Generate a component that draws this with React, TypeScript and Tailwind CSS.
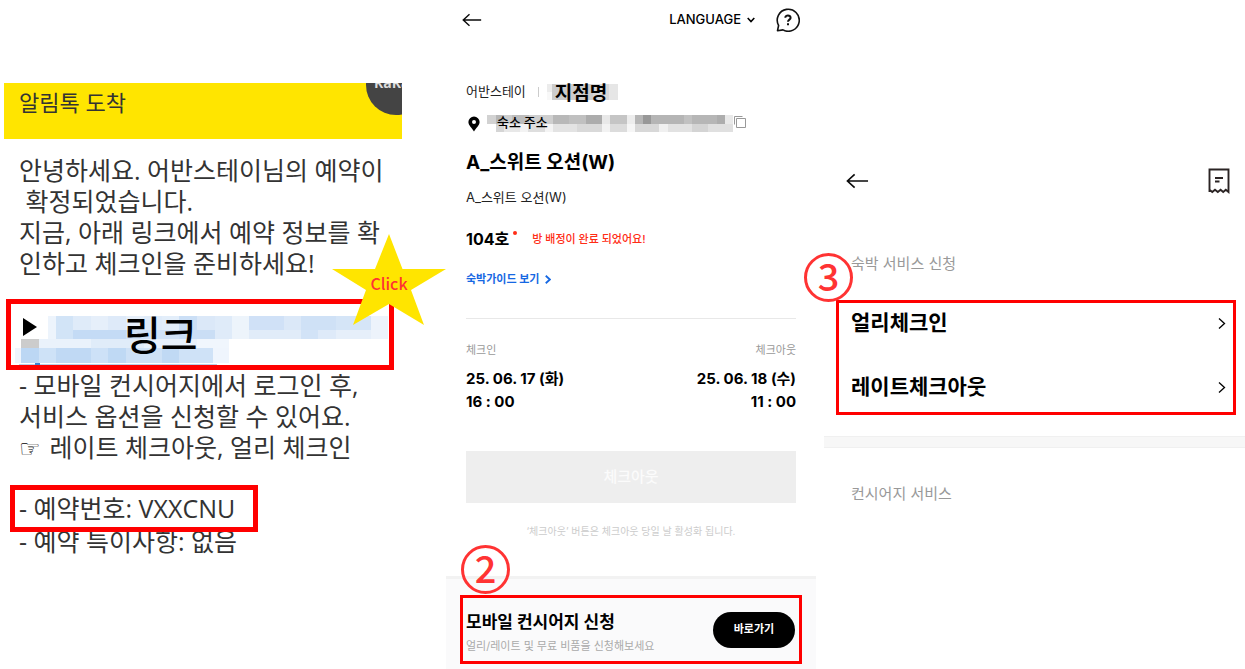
import React from "react";

const gothic = "font-['Open_Sans','Noto_Sans_CJK_KR',sans-serif]";
const sans = "font-['Inter','Noto_Sans_CJK_KR',sans-serif]";

type Tile = [x: number, y: number, w: number, h: number, fill: string];

const linkTiles: Tile[] = [
  [33, 12, 8, 23, "#edf4fc"],
  [41, 12, 17, 23, "#d2e4f7"],
  [58, 12, 18, 14, "#dfebf9"],
  [76, 12, 17, 14, "#e6effa"],
  [93, 12, 18, 14, "#deeaf9"],
  [111, 12, 18, 14, "#e6effa"],
  [129, 12, 18, 14, "#e0ecfa"],
  [147, 12, 17, 14, "#e3eefa"],
  [164, 12, 18, 14, "#cbdff6"],
  [182, 12, 18, 14, "#dbe8f8"],
  [200, 12, 17, 23, "#dfebf9"],
  [217, 12, 17, 23, "#edf4fb"],
  [234, 12, 35, 14, "#d0e1f7"],
  [269, 12, 17, 14, "#dbe8f8"],
  [286, 12, 35, 14, "#cfe1f6"],
  [321, 12, 35, 14, "#d5e5f7"],
  [356, 12, 17, 23, "#edf3fb"],
  [58, 26, 53, 9, "#c4dbf5"],
  [111, 26, 53, 9, "#d0e2f7"],
  [164, 26, 36, 9, "#cadef5"],
  [234, 26, 52, 9, "#e1ecf9"],
  [286, 26, 17, 9, "#d2e3f7"],
  [303, 26, 18, 9, "#deeaf9"],
  [321, 26, 35, 9, "#e6effa"],
  [6, 35, 18, 9, "#cccccc"],
  [24, 35, 52, 9, "#eaf2fb"],
  [76, 35, 53, 9, "#e0ecf9"],
  [129, 35, 53, 9, "#e8f1fb"],
  [182, 35, 32, 9, "#f0f6fd"],
  [0, 44, 6, 15, "#eff5fd"],
  [6, 44, 18, 15, "#bcd7f4"],
  [24, 44, 17, 15, "#cee2f7"],
  [41, 44, 35, 15, "#c0d9f4"],
  [76, 44, 17, 15, "#cde1f7"],
  [93, 44, 18, 15, "#bfd9f4"],
  [111, 44, 36, 15, "#cee1f6"],
  [147, 44, 17, 15, "#c0d9f4"],
  [164, 44, 34, 15, "#cfe2f7"],
  [198, 44, 16, 15, "#eff5fd"],
  [4, 60, 198, 1, "#b9cfe8"],
  [20, 59, 5, 2, "#3b82d0"],
];

const nameTiles: Tile[] = [
  [0, 0, 5, 8, "#ececec"],
  [5, 0, 41, 16, "#cccccc"],
  [46, 0, 16, 16, "#d8d8d8"],
  [62, 0, 9, 16, "#e6e6e6"],
  [0, 8, 5, 8, "#f8f8f8"],
];

const addressTiles: Tile[] = [
  [0, 0, 9, 9, "#d2d2d2"],
  [9, 0, 8, 9, "#b6b6b6"],
  [17, 0, 8, 9, "#cecece"],
  [25, 0, 17, 9, "#bdbdbd"],
  [42, 0, 16, 9, "#cecece"],
  [58, 0, 8, 9, "#cfcfcf"],
  [66, 0, 16, 9, "#b8b8b8"],
  [82, 0, 17, 9, "#c0c0c0"],
  [99, 0, 16, 9, "#acacac"],
  [115, 0, 8, 9, "#e8e8e8"],
  [123, 0, 17, 9, "#c5c5c5"],
  [140, 0, 8, 9, "#ededed"],
  [148, 0, 8, 9, "#b6b6b6"],
  [156, 0, 8, 9, "#989898"],
  [164, 0, 33, 9, "#b5b5b5"],
  [197, 0, 8, 9, "#c1c1c1"],
  [205, 0, 25, 9, "#b6b6b6"],
  [230, 0, 8, 9, "#adadad"],
  [238, 0, 8, 9, "#e9e9e9"],
  [9, 9, 8, 8, "#d5d5d5"],
  [17, 9, 16, 8, "#e8e8e8"],
  [33, 9, 8, 8, "#f3f3f3"],
  [41, 9, 17, 8, "#dedede"],
  [58, 9, 8, 8, "#f4f4f4"],
  [66, 9, 24, 8, "#e3e3e3"],
  [90, 9, 25, 8, "#d9d9d9"],
  [115, 9, 8, 8, "#f2f2f2"],
  [123, 9, 17, 8, "#dcdcdc"],
  [140, 9, 8, 8, "#f6f6f6"],
  [148, 9, 24, 8, "#d8d8d8"],
  [172, 9, 9, 8, "#f0f0f0"],
  [181, 9, 24, 8, "#e2e2e2"],
  [205, 9, 16, 8, "#d4d4d4"],
  [221, 9, 25, 8, "#e0e0e0"],
];

function Mosaic({ tiles, width, height, className }: { tiles: Tile[]; width: number; height: number; className?: string }) {
  return (
    <svg width={width} height={height} viewBox={`0 0 ${width} ${height}`} className={className} aria-hidden="true" shapeRendering="crispEdges">
      {tiles.map(([x, y, w, h, fill]) => (
        <rect key={`${x}-${y}`} x={x} y={y} width={w} height={h} fill={fill} />
      ))}
    </svg>
  );
}

function BackArrow({ className }: { className: string }) {
  return (
    <svg viewBox="0 0 24 16" className={className} fill="none" stroke="#0a0a0a" strokeWidth="1.7" aria-hidden="true">
      <path d="M23 8H1.5M9 1L1.5 8L9 15" />
    </svg>
  );
}

function Chevron({ className, strokeWidth }: { className: string; strokeWidth: number }) {
  return (
    <svg viewBox="0 0 8 12" className={className} fill="none" stroke="currentColor" strokeWidth={strokeWidth} aria-hidden="true">
      <path d="M1 1L6.5 6L1 11" />
    </svg>
  );
}

function StepBadge({ step, className }: { step: number; className: string }) {
  return (
    <span
      className={`absolute z-10 flex size-[49px] items-center justify-center rounded-full border-3 border-[#ff3333] pb-[6px] font-['Noto_Sans_CJK_KR',sans-serif] text-[38px] leading-none font-medium text-[#ff3333] ${className}`}
    >
      {step}
    </span>
  );
}

function Star() {
  return (
    <div className="absolute top-[234px] right-0 z-10 h-[92px] w-[114px]">
      <svg viewBox="0 0 114 92" className="absolute inset-0 size-full" aria-hidden="true">
        <path d="M57 0L70.5 35H114L79 56L92 91L57 70L21 91L34 56L0 35H43Z" fill="#ffe500" />
      </svg>
      <span className="relative block pt-[39px] text-center font-['Noto_Sans_CJK_KR',sans-serif] text-base leading-5 font-medium text-[#ff3333]">Click</span>
    </div>
  );
}

function MessagePanel() {
  return (
    <section className={`relative pt-[83px] text-[25px] leading-[31px] text-[#333] ${gothic}`}>
      <header className="relative mr-11 ml-1 h-14 overflow-hidden bg-[#ffe500] pt-1 pl-[15px] text-[22px]">
        알림톡 도착
        <span className="absolute -top-7 -right-6 size-[60px] rounded-full bg-[#444] pt-[18px] pl-2 text-sm font-bold text-[#ddd]">KaKa</span>
      </header>

      <p className="mt-4 pl-[19px] whitespace-pre">
        안녕하세요. 어반스테이님의 예약이{"\n"} 확정되었습니다.{"\n"}지금, 아래 링크에서 예약 정보를 확{"\n"}인하고 체크인을 준비하세요!
      </p>

      <div className="relative mt-5 mr-[52px] ml-[6px] h-[71px] border-5 border-[#ff0000]">
        <Mosaic tiles={linkTiles} width={373} height={61} className="absolute top-0 left-1" />
        <svg viewBox="0 0 14 18" className="absolute top-[14px] left-3 h-[18px] w-[14px]" aria-hidden="true">
          <path d="M0 0L14 9L0 18Z" fill="#000" />
        </svg>
        <a href="#link" className="relative ml-[113px] block pt-2 text-[40px] leading-[46px] font-medium text-black">
          링크
        </a>
      </div>
      <Star />

      <p className="pl-[19px] whitespace-pre">
        - 모바일 컨시어지에서 로그인 후,{"\n"}서비스 옵션을 신청할 수 있어요.{"\n"}
        <span className="inline-block w-6 font-['DejaVu_Sans',sans-serif] text-2xl leading-none font-bold text-black">☞</span> 레이트 체크아웃, 얼리 체크인
      </p>

      <p className="relative z-10 mt-[22px] ml-[10px] h-[47px] w-[248px] border-5 border-[#ff0000] pt-[3px] pl-1">- 예약번호: VXXCNU</p>
      <p className="-mt-[6px] pl-[19px]">- 예약 특이사항: 없음</p>
    </section>
  );
}

function StayPanel() {
  return (
    <section className={`text-black ${sans}`}>
      <header className="flex h-10 items-center pr-4 pl-4">
        <button type="button" aria-label="뒤로">
          <BackArrow className="h-[14px] w-5" />
        </button>
        <button type="button" className="ml-auto flex items-center gap-[6px] text-[13px] font-medium">
          LANGUAGE
          <svg viewBox="0 0 8 6" className="h-[6px] w-2" fill="none" stroke="currentColor" strokeWidth="1.6" aria-hidden="true">
            <path d="M0.7 1L4 4.5L7.3 1" />
          </svg>
        </button>
        <button type="button" aria-label="도움말" className="ml-[21px]">
          <svg viewBox="0 0 24 24" className="size-6" fill="none" stroke="#111" strokeWidth="1.6" aria-hidden="true">
            <path d="M2.6 17.5A11 11 0 1 1 7 21.9L1.5 22.7Z" strokeLinejoin="round" />
            <path d="M9.3 9.8C9.3 6.6 14.8 6.8 14.6 9.9C14.5 11.7 12 11.7 12 13.8M12 15.3V17.2" strokeWidth="2" />
          </svg>
        </button>
      </header>

      <div className="px-5 pt-[41px]">
        <div className="flex h-[22px] items-center text-[13px] text-[#222]">
          어반스테이
          <span className="mr-2 ml-3 h-[10px] w-px bg-[#ccc]" />
          <span className="relative h-4 w-[71px]">
            <Mosaic tiles={nameTiles} width={71} height={16} className="absolute inset-0" />
            <span className="relative block pl-2 font-['Noto_Sans_CJK_KR',sans-serif] text-[19px] leading-4 font-bold text-black">지점명</span>
          </span>
        </div>

        <div className="mt-3 flex h-[17px] items-center">
          <svg viewBox="0 0 12 16" className="ml-[2px] h-4 w-3" aria-hidden="true">
            <path d="M6 0.5A5.6 5.6 0 0 0 0.4 6.1C0.4 9.5 4 12 6 15.5C8 12 11.6 9.5 11.6 6.1A5.6 5.6 0 0 0 6 0.5ZM6 4A2 2 0 1 1 6 8A2 2 0 0 1 6 4Z" fill="#000" fillRule="evenodd" />
          </svg>
          <span className="relative ml-[7px] h-[17px] w-[246px]">
            <Mosaic tiles={addressTiles} width={246} height={17} className="absolute inset-0" />
            <span className="relative block pl-[10px] font-['Noto_Sans_CJK_KR',sans-serif] text-[13px] leading-[14px] font-medium">숙소 주소</span>
          </span>
          <button type="button" aria-label="주소 복사" className="self-start">
            <svg viewBox="0 0 14 14" className="size-[14px]" fill="none" stroke="#999" aria-hidden="true">
              <path d="M1.5 9.5V1.5H9.5M3.5 3.5H12.5V12.5H3.5Z" />
            </svg>
          </button>
        </div>

        <h1 className="mt-[18px] text-[19px] leading-[26px] font-bold">A_스위트 오션(W)</h1>
        <p className="mt-[11px] text-[13px] leading-5 text-[#222]">A_스위트 오션(W)</p>

        <div className="mt-5 flex h-6 items-center">
          <strong className="text-base leading-6 font-bold">104호</strong>
          <span className="mb-3 ml-1 size-1 rounded-full bg-[#ff2d16]" />
          <span className="ml-[15px] text-[11px] font-medium text-[#ff2d16]">방 배정이 완료 되었어요!</span>
        </div>

        <a href="#guide" className="mt-5 flex h-4 items-center gap-[6px] text-[11px] font-bold text-[#1668e3]">
          숙박가이드 보기
          <Chevron className="h-[9px] w-[6px]" strokeWidth={2.4} />
        </a>

        <div className="mt-[31px] border-t border-[#e8e8e8] pt-[23px]">
          <div className="flex justify-between text-[11px] leading-4 text-[#999]">
            <span>체크인</span>
            <span>체크아웃</span>
          </div>
          <div className="mt-[9px] flex justify-between text-[15px] leading-[23px] font-bold">
            <p>
              25. 06. 17 (화)
              <br />
              16 : 00
            </p>
            <p className="text-right">
              25. 06. 18 (수)
              <br />
              11 : 00
            </p>
          </div>
        </div>

        <button type="button" disabled className="mt-[38px] h-[52px] w-full bg-[#eee] text-[15px] font-medium text-[#fbfbfb]">
          체크아웃
        </button>
        <p className="mt-5 text-center text-[10px] leading-4 text-[#ccc]">‘체크아웃’ 버튼은 체크아웃 당일 날 활성화 됩니다.</p>
      </div>

      <footer className="relative mt-[37px] border-t-3 border-[#f2f2f2] bg-[#fafafb] pt-4 pb-[5px]">
        <StepBadge step={2} className="-top-[34px] left-[15px]" />
        <div className="mx-[14px] flex h-[69px] items-center justify-between border-[3px] border-[#ff0000] pr-1 pl-[3px]">
          <div className="pt-[6px]">
            <h2 className="text-[17px] leading-6 font-bold">모바일 컨시어지 신청</h2>
            <p className="mt-[2px] text-[11px] leading-5 text-[#aaa]">얼리/레이트 및 무료 비품을 신청해보세요</p>
          </div>
          <button type="button" className="h-9 w-[82px] rounded-full bg-black text-[11px] font-bold text-white">
            바로가기
          </button>
        </div>
      </footer>
    </section>
  );
}

function ServicePanel() {
  return (
    <section className={`pt-[168px] text-black ${sans}`}>
      <header className="flex h-[26px] items-center justify-between pr-[15px] pl-[30px]">
        <button type="button" aria-label="뒤로">
          <BackArrow className="h-4 w-[23px]" />
        </button>
        <button type="button" aria-label="신청 내역">
          <svg viewBox="0 0 22 26" className="h-[26px] w-[22px]" fill="none" stroke="#2b2424" strokeWidth="1.9" aria-hidden="true">
            <path d="M1.5 24V1.5H20.5V24L17.8 21.8L15.2 24L12.6 21.8L9.8 24L7 21.8L4.3 24L1.5 21.8" />
            <path d="M7 10H15M7 13.5H11.5" />
          </svg>
        </button>
      </header>

      <h2 className="mt-[58px] pl-[35px] text-[15px] leading-6 text-[#999]">숙박 서비스 신청</h2>

      <div className="relative mt-6 mr-[9px] ml-5 flex flex-col gap-6 border-[3px] border-[#ff0000] pb-[5px]">
        <StepBadge step={3} className="-top-[50px] -left-[35px]" />
        {["얼리체크인", "레이트체크아웃"].map((label) => (
          <button key={label} type="button" className="flex h-10 items-center justify-between pr-[7px] pl-3 text-[21px] font-bold">
            {label}
            <Chevron className="h-[13px] w-2" strokeWidth={1.3} />
          </button>
        ))}
      </div>

      <hr className="mt-[21px] ml-2 h-3 border-y border-[#f0f0f0] bg-[#f7f7f7]" />
      <h2 className="mt-[34px] pl-[35px] text-[15px] leading-6 text-[#999]">컨시어지 서비스</h2>
    </section>
  );
}

export default function App() {
  return (
    <main className="grid grid-cols-[446fr_370fr_429fr] bg-white">
      <MessagePanel />
      <StayPanel />
      <ServicePanel />
    </main>
  );
}
